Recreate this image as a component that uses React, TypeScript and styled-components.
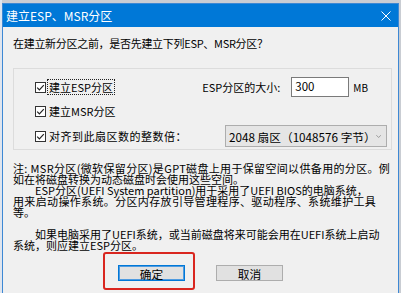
import React from 'react';
import styled, { createGlobalStyle } from 'styled-components';

const GlobalStyle = createGlobalStyle`
  html, body {
    margin: 0;
    padding: 0;
  }
  body {
    width: 401px;
    height: 293px;
    overflow: hidden;
    background: #c9cdd3;
    font-family: "Noto Sans CJK SC", "Noto Sans", sans-serif;
    color: #000;
  }
`;

const Screen = styled.div`
  width: 401px;
  height: 293px;
  box-sizing: border-box;
  padding: 3px 0 0 2px;
  display: flex;
  background: linear-gradient(to right, #dfe5ee 0, #dfe5ee 2px, transparent 2px);
`;

const Dialog = styled.div`
  width: 397px;
  height: 290px;
  box-sizing: border-box;
  border: 1px solid #3d88d4;
  border-bottom: none;
  background: #f0f0f0;
  display: flex;
  flex-direction: column;
`;

const TitleBar = styled.div`
  height: 23px;
  background: #0078d7;
  color: #fff;
  display: flex;
  align-items: center;
  padding: 0 7px 0 3px;
  font-size: 12px;
`;

const Title = styled.div`
  flex: 1;
  white-space: nowrap;
`;

const Body = styled.div`
  display: flex;
  flex-direction: column;
  padding: 0 6px 0 10px;
  font-size: 11px;
`;

const Prompt = styled.div`
  margin-top: 8px;
  line-height: 16px;
  letter-spacing: -0.3px;
  white-space: nowrap;
`;

const GroupBox = styled.div`
  margin-top: 17px;
  width: 379px;
  box-sizing: border-box;
  border: 1px solid #dcdcdc;
  padding: 8px 0 2px 21px;
  display: flex;
  flex-direction: column;
`;

const Row = styled.div<{ $h: number }>`
  height: ${(p) => p.$h}px;
  display: flex;
  align-items: center;
`;

const CheckItem = styled.label`
  display: flex;
  align-items: center;
  gap: 2px;
  white-space: nowrap;
`;

const CheckText = styled.span<{ $focus?: boolean; $ls?: number }>`
  padding: 0 1px;
  line-height: 14px;
  letter-spacing: ${(p) => p.$ls ?? 0}px;
  outline: ${(p) => (p.$focus ? '1px dotted #222' : 'none')};
`;

const SizeGroup = styled.div`
  margin-left: auto;
  margin-right: 23px;
  display: flex;
  align-items: center;
`;

const SizeLabel = styled.span`
  width: 89px;
  white-space: nowrap;
`;

const SizeInput = styled.div`
  width: 58px;
  height: 20px;
  box-sizing: border-box;
  border: 1px solid #7a7a7a;
  background: #fff;
  padding: 0 3px;
  line-height: 17px;
  font-size: 11.5px;
`;

const Unit = styled.span`
  margin-left: 4px;
  font-size: 10px;
`;

const Select = styled.div`
  margin-left: auto;
  margin-right: 4px;
  width: 162px;
  height: 22px;
  box-sizing: border-box;
  border: 1px solid #adadad;
  background: #e5e5e5;
  display: flex;
  align-items: center;
  padding: 0 5px 0 3px;
  font-size: 11.7px;
  white-space: nowrap;
`;

const SelectText = styled.span`
  flex: 1;
`;

const Notes = styled.div`
  margin-top: 13px;
  line-height: 11px;
`;

const NoteLine = styled.div<{ $indent?: boolean; $ls?: number }>`
  white-space: nowrap;
  height: 11px;
  letter-spacing: ${(p) => p.$ls ?? 0}px;
  padding-left: ${(p) => (p.$indent ? '22px' : '0')};
`;

const ButtonRow = styled.div`
  margin-top: 14px;
  padding-right: 4px;
  display: flex;
  justify-content: center;
  gap: 31px;
`;

const ButtonSlot = styled.div`
  position: relative;
`;

const Button = styled.div<{ $default?: boolean }>`
  width: 67px;
  height: 16px;
  box-sizing: border-box;
  background: #e1e1e1;
  border: 1px solid ${(p) => (p.$default ? '#0078d7' : '#adadad')};
  box-shadow: ${(p) => (p.$default ? 'inset 0 0 0 1px #4f9be0' : 'none')};
  display: flex;
  align-items: center;
  justify-content: center;
  font-size: 11.7px;
`;

const Highlight = styled.div`
  position: absolute;
  left: -15px;
  top: -13px;
  width: 92px;
  height: 38px;
  box-sizing: border-box;
  border: 2.5px solid #d9261f;
  border-radius: 3px;
  pointer-events: none;
`;

const CheckBox = () => (
  <svg width="11" height="11" viewBox="0 0 11 11">
    <rect x="0.5" y="0.5" width="10" height="10" fill="#fff" stroke="#333" />
    <path d="M2.2 5.6 L4.4 7.9 L8.8 3.2" fill="none" stroke="#222" strokeWidth="1.2" />
  </svg>
);

const CloseIcon = () => (
  <svg width="10" height="10" viewBox="0 0 10 10">
    <path d="M0.5 0.5 L9.5 9.5 M9.5 0.5 L0.5 9.5" stroke="#fff" strokeWidth="1" />
  </svg>
);

const Chevron = () => (
  <svg width="8" height="5" viewBox="0 0 8 5">
    <path d="M0.5 0.5 L4 4 L7.5 0.5" fill="none" stroke="#777" strokeWidth="1" />
  </svg>
);

const notes = [
  { text: '注: MSR分区(微软保留分区)是GPT磁盘上用于保留空间以供备用的分区。例', ls: 0.34 },
  { text: '如在将磁盘转换为动态磁盘时会使用这些空间。' },
  { text: 'ESP分区(UEFI System partition)用于采用了UEFI BIOS的电脑系统，', indent: true },
  { text: '用来启动操作系统。分区内存放引导管理程序、驱动程序、系统维护工具', ls: 0.35 },
  { text: '等。' },
  { text: '' },
  { text: '如果电脑采用了UEFI系统，或当前磁盘将来可能会用在UEFI系统上启动', indent: true },
  { text: '系统，则应建立ESP分区。' },
];

export default function App() {
  return (
    <>
      <GlobalStyle />
      <Screen>
        <Dialog>
          <TitleBar>
            <Title>建立ESP、MSR分区</Title>
            <CloseIcon />
          </TitleBar>
          <Body>
            <Prompt>在建立新分区之前，是否先建立下列ESP、MSR分区？</Prompt>
            <GroupBox>
              <Row $h={20}>
                <CheckItem>
                  <CheckBox />
                  <CheckText $focus>建立ESP分区</CheckText>
                </CheckItem>
                <SizeGroup>
                  <SizeLabel>ESP分区的大小:</SizeLabel>
                  <SizeInput>300</SizeInput>
                  <Unit>MB</Unit>
                </SizeGroup>
              </Row>
              <Row $h={28}>
                <CheckItem>
                  <CheckBox />
                  <CheckText>建立MSR分区</CheckText>
                </CheckItem>
              </Row>
              <Row $h={22}>
                <CheckItem>
                  <CheckBox />
                  <CheckText $ls={0.5}>对齐到此扇区数的整数倍：</CheckText>
                </CheckItem>
                <Select>
                  <SelectText>2048 扇区（1048576 字节）</SelectText>
                  <Chevron />
                </Select>
              </Row>
            </GroupBox>
            <Notes>
              {notes.map((n, i) => (
                <NoteLine key={i} $indent={n.indent} $ls={n.ls}>
                  {n.text}
                </NoteLine>
              ))}
            </Notes>
            <ButtonRow>
              <ButtonSlot>
                <Button $default>确定</Button>
                <Highlight />
              </ButtonSlot>
              <ButtonSlot>
                <Button>取消</Button>
              </ButtonSlot>
            </ButtonRow>
          </Body>
        </Dialog>
      </Screen>
    </>
  );
}
